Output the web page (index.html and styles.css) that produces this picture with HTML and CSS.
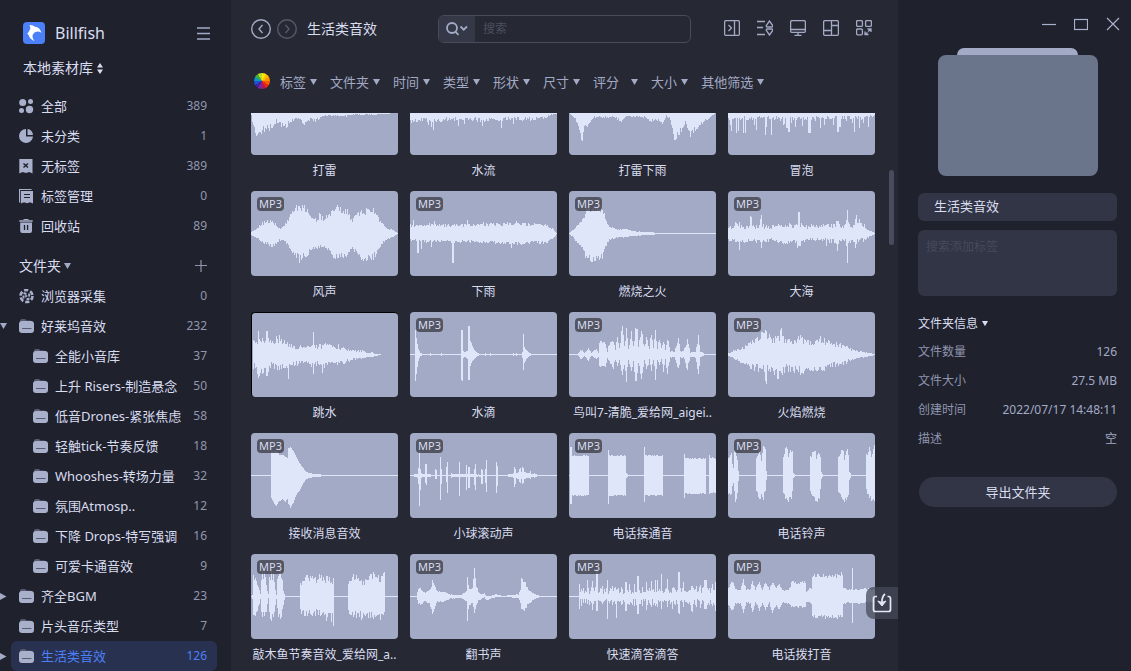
FILE: index.html
```html
<!DOCTYPE html>
<html lang="zh-CN">
<head>
<meta charset="utf-8">
<meta name="viewport" content="width=device-width, initial-scale=1">
<title>Billfish</title>
<link rel="stylesheet" href="styles.css">
</head>
<body>
<svg class="defs" aria-hidden="true">
  <symbol id="folder" viewBox="0 0 15 15">
    <path d="M1 6V2Q1 0 3 0h2.500Q6.500 0 7 1l.5.600H11q2 0 2 2V6z" fill="#565b6f"/>
    <rect x="0" y="2" width="15" height="12" rx="3" fill="#a9b0cb"/>
    <path d="M3.500 9.500h8.500" stroke="#565b70" stroke-width="1.200" stroke-linecap="round"/>
  </symbol>
  <symbol id="down" viewBox="0 0 7 7"><path d="M0 0h7L3.500 6z" fill="currentColor"/></symbol>
  <symbol id="right" viewBox="0 0 7 7"><path d="M0 0v7L6.500 3.500z" fill="currentColor"/></symbol>
</svg>
<div class="app">
  <aside class="sidebar">
    <header class="brand">
      <svg class="logo" viewBox="0 0 22 22" aria-hidden="true">
        <rect width="22" height="22" rx="4" fill="#4b80f8"/>
        <path d="M6.500 3Q10 2.800 12 4.800Q16.500 5 18.500 10.800Q15 8.800 12.500 10Q9.500 11.500 9.500 14.500Q9.500 17 11.500 19Q6.500 17 5.800 13.200L4.300 11.800Q5.500 10.500 6.500 8.500Q8 5.500 6.500 3z" fill="#fff"/>
      </svg>
      <span class="brand-name">Billfish</span>
      <button class="icon-btn" aria-label="菜单"><svg width="13" height="13" viewBox="0 0 13 13"><path d="M0 1h13M0 6.500h13M0 12h13" stroke="#a3aac5" stroke-width="1.400"/></svg></button>
    </header>
    <button class="library">本地素材库<svg width="6" height="11" viewBox="0 0 6 11"><path d="M3 0l3 4.500H0zM3 11L0 6.500h6z" fill="currentColor"/></svg></button>

    <nav class="nav" aria-label="素材">
      <div class="row"><span class="twist"></span><a class="item" href="#"><svg class="ico" viewBox="0 0 15 15"><g fill="#a9b0cb"><circle cx="3.700" cy="3.500" r="3.500"/><circle cx="11.500" cy="2.500" r="2.500"/><circle cx="2.500" cy="11.500" r="2.500"/><circle cx="10.500" cy="10.500" r="3.700"/></g></svg><span class="name">全部</span><span class="count">389</span></a></div>
      <div class="row"><span class="twist"></span><a class="item" href="#"><svg class="ico" viewBox="0 0 15 15"><path d="M7 0A7 7 0 1 0 14 7.500H7z" fill="#a9b0cb"/><path d="M8.500 0v6H14A6 6 0 0 0 8.500 0z" fill="#a9b0cb"/></svg><span class="name">未分类</span><span class="count">1</span></a></div>
      <div class="row"><span class="twist"></span><a class="item" href="#"><svg class="ico" viewBox="0 0 15 15"><path d="M.3 0h13.200V14.500l-3.200-1.500-3.300 1-3.500-1L.3 14.500z" fill="#a9b0cb"/><path d="M4.500 4.500l4.500 4M9 4.500L4.500 8.500" stroke="#1f212d" stroke-width="1.400"/></svg><span class="name">无标签</span><span class="count">389</span></a></div>
      <div class="row"><span class="twist"></span><a class="item" href="#"><svg class="ico" viewBox="0 0 15 15"><path d="M.6 13.500V.5h12" fill="none" stroke="#a9b0cb" stroke-width="1.200"/><path d="M2 2H14V14.500l-3-1.300-3 1-3-1-3 1.300z" fill="#a9b0cb"/><path d="M5 5.500h6M5 8.500h6" stroke="#1f212d" stroke-width="1.100"/></svg><span class="name">标签管理</span><span class="count">0</span></a></div>
      <div class="row"><span class="twist"></span><a class="item" href="#"><svg class="ico" viewBox="0 0 15 15"><path d="M4.500.300h5M.3 2h13.400" stroke="#a9b0cb" stroke-width="1.300"/><path d="M1.200 3.500h11.800v8.500q0 2-2 2H3.200q-2 0-2-2z" fill="#a9b0cb"/><path d="M5.500 6v5M8.600 6v5" stroke="#1f212d" stroke-width="1.300"/></svg><span class="name">回收站</span><span class="count">89</span></a></div>
    </nav>

    <div class="group-head">
      <button class="group-title">文件夹<svg class="tri"><use href="#down"/></svg></button>
      <button class="icon-btn" aria-label="新建文件夹"><svg width="12" height="12" viewBox="0 0 12 12"><path d="M0 5.500h12M6 0v12" stroke="#8f95ad" stroke-width="1.200"/></svg></button>
    </div>
    <nav class="nav" aria-label="文件夹">
      <div class="row"><span class="twist"></span><a class="item" href="#"><svg class="ico" viewBox="0 0 15 15"><circle cx="7.500" cy="7" r="6" fill="none" stroke="#a9b0cb" stroke-width="2.600" stroke-dasharray="4.200 2.080"/><path d="M4.500 4l3 1M10.500 4.500l-.5 3M10.500 9.500l-3 1M4.500 6.500v3" stroke="#a9b0cb" stroke-width="2"/><path d="M6.200 5.500l2.800 1.600-2.800 1.700z" fill="#a9b0cb"/></svg><span class="name">浏览器采集</span><span class="count">0</span></a></div>
      <div class="row"><button class="twist" aria-label="收起"><svg class="tri"><use href="#down"/></svg></button><a class="item" href="#"><svg class="ico"><use href="#folder"/></svg><span class="name">好莱坞音效</span><span class="count">232</span></a></div>
      <div class="row child"><span class="twist"></span><a class="item" href="#"><svg class="ico"><use href="#folder"/></svg><span class="name">全能小音库</span><span class="count">37</span></a></div>
      <div class="row child"><span class="twist"></span><a class="item" href="#"><svg class="ico"><use href="#folder"/></svg><span class="name">上升 Risers-制造悬念</span><span class="count">50</span></a></div>
      <div class="row child"><span class="twist"></span><a class="item" href="#"><svg class="ico"><use href="#folder"/></svg><span class="name">低音Drones-紧张焦虑</span><span class="count">58</span></a></div>
      <div class="row child"><span class="twist"></span><a class="item" href="#"><svg class="ico"><use href="#folder"/></svg><span class="name">轻触tick-节奏反馈</span><span class="count">18</span></a></div>
      <div class="row child"><span class="twist"></span><a class="item" href="#"><svg class="ico"><use href="#folder"/></svg><span class="name">Whooshes-转场力量</span><span class="count">32</span></a></div>
      <div class="row child"><span class="twist"></span><a class="item" href="#"><svg class="ico"><use href="#folder"/></svg><span class="name">氛围Atmosp..</span><span class="count">12</span></a></div>
      <div class="row child"><span class="twist"></span><a class="item" href="#"><svg class="ico"><use href="#folder"/></svg><span class="name">下降 Drops-特写强调</span><span class="count">16</span></a></div>
      <div class="row child"><span class="twist"></span><a class="item" href="#"><svg class="ico"><use href="#folder"/></svg><span class="name">可爱卡通音效</span><span class="count">9</span></a></div>
      <div class="row"><button class="twist" aria-label="展开"><svg class="tri"><use href="#right"/></svg></button><a class="item" href="#"><svg class="ico"><use href="#folder"/></svg><span class="name">齐全BGM</span><span class="count">23</span></a></div>
      <div class="row"><span class="twist"></span><a class="item" href="#"><svg class="ico"><use href="#folder"/></svg><span class="name">片头音乐类型</span><span class="count">7</span></a></div>
      <div class="row"><button class="twist" aria-label="展开"><svg class="tri"><use href="#right"/></svg></button><a class="item active" href="#"><svg class="ico"><use href="#folder"/></svg><span class="name">生活类音效</span><span class="count">126</span></a></div>
    </nav>
  </aside>

  <main class="main">
    <div class="topbar">
      <div class="crumbs">
        <button class="round" aria-label="后退"><svg width="20" height="20" viewBox="0 0 20 20" fill="none" stroke="currentColor" stroke-width="1.400"><circle cx="10" cy="10" r="9.300"/><path d="M11.500 6L8 10l3.500 4"/></svg></button>
        <button class="round dim" aria-label="前进"><svg width="20" height="20" viewBox="0 0 20 20" fill="none" stroke="currentColor" stroke-width="1.400"><circle cx="10" cy="10" r="9.300"/><path d="M8.500 6L12 10l-3.500 4"/></svg></button>
        <h1>生活类音效</h1>
      </div>
      <form class="search">
        <button class="search-kind" type="button" aria-label="搜索方式"><svg width="22" height="14" viewBox="0 0 22 14" fill="none" stroke="#a3aac5" stroke-width="1.800"><circle cx="6" cy="6" r="5"/><path d="M9.500 9.800l3 3M14.500 4.500l3.200 3.200L21 4.500"/></svg></button>
        <input type="text" placeholder="搜索" aria-label="搜索">
      </form>
      <div class="tools">
        <button class="icon-btn" aria-label="侧栏"><svg width="16" height="16" viewBox="0 0 16 16"><rect x=".6" y=".6" width="14.800" height="14.800" rx="1.500"/><path d="M10.500 1v14M4.500 5l3 3-3 3"/></svg></button>
        <button class="icon-btn" aria-label="排序"><svg width="16" height="16" viewBox="0 0 16 16"><path d="M0 1.500h8M0 7.500h6M0 14.500h8M12.500 1L9.300 5.500q-.3 1.500 1 1.500h4.400q1.300 0 1-1.500zM12.500 15L9.300 10.500q-.3-1.500 1-1.500h4.400q1.300 0 1 1.500z"/></svg></button>
        <button class="icon-btn" aria-label="显示"><svg width="16" height="16" viewBox="0 0 16 16"><rect x=".6" y=".6" width="14.800" height="11.800" rx="1.500"/><path d="M1 9.500h14M8 12v3M4.500 15.400h7"/></svg></button>
        <button class="icon-btn" aria-label="布局"><svg width="16" height="16" viewBox="0 0 16 16"><rect x=".6" y=".6" width="14.800" height="14.800" rx="1.500"/><path d="M8.500 1v14M8.500 5.500h6.500M1 10.500h7.500"/></svg></button>
        <button class="icon-btn" aria-label="全屏"><svg width="16" height="16" viewBox="0 0 16 16"><rect x=".6" y=".6" width="5.800" height="5.800" rx="1"/><rect x="9.600" y=".6" width="5.800" height="5.800" rx="1"/><rect x=".6" y="9" width="5.800" height="5.800" rx="1"/><path d="M11.500 9h3.500v3M15 9l-3 2.500M9 11.500v3h3.500M9 14.500l2.500-2"/></svg></button>
      </div>
    </div>

    <div class="filters">
      <button class="wheel" aria-label="颜色"></button>
      <button class="filter">标签<svg class="tri"><use href="#down"/></svg></button>
      <button class="filter">文件夹<svg class="tri"><use href="#down"/></svg></button>
      <button class="filter">时间<svg class="tri"><use href="#down"/></svg></button>
      <button class="filter">类型<svg class="tri"><use href="#down"/></svg></button>
      <button class="filter">形状<svg class="tri"><use href="#down"/></svg></button>
      <button class="filter">尺寸<svg class="tri"><use href="#down"/></svg></button>
      <button class="filter wide">评分<svg class="tri"><use href="#down"/></svg></button>
      <button class="filter">大小<svg class="tri"><use href="#down"/></svg></button>
      <button class="filter">其他筛选<svg class="tri"><use href="#down"/></svg></button>
    </div>

    <div class="stage">
      <div class="scroller">
        <div class="grid">
          <figure class="card"><div class="thumb"><svg class="wave" data-wave="thunder"></svg></div><figcaption>打雷</figcaption></figure>
          <figure class="card"><div class="thumb"><svg class="wave" data-wave="stream"></svg></div><figcaption>水流</figcaption></figure>
          <figure class="card"><div class="thumb"><svg class="wave" data-wave="storm"></svg></div><figcaption>打雷下雨</figcaption></figure>
          <figure class="card"><div class="thumb"><svg class="wave" data-wave="bubbles"></svg></div><figcaption>冒泡</figcaption></figure>

          <figure class="card"><div class="thumb"><svg class="wave" data-wave="wind"></svg><span class="tag">MP3</span></div><figcaption>风声</figcaption></figure>
          <figure class="card"><div class="thumb"><svg class="wave" data-wave="rain"></svg><span class="tag">MP3</span></div><figcaption>下雨</figcaption></figure>
          <figure class="card"><div class="thumb"><svg class="wave" data-wave="fire"></svg><span class="tag">MP3</span></div><figcaption>燃烧之火</figcaption></figure>
          <figure class="card"><div class="thumb"><svg class="wave" data-wave="sea"></svg><span class="tag">MP3</span></div><figcaption>大海</figcaption></figure>

          <figure class="card"><div class="thumb framed"><svg class="wave" data-wave="dive"></svg></div><figcaption>跳水</figcaption></figure>
          <figure class="card"><div class="thumb"><svg class="wave" data-wave="drip"></svg><span class="tag">MP3</span></div><figcaption>水滴</figcaption></figure>
          <figure class="card"><div class="thumb"><svg class="wave" data-wave="birds"></svg><span class="tag">MP3</span></div><figcaption>鸟叫7-清脆_爱给网_aigei..</figcaption></figure>
          <figure class="card"><div class="thumb"><svg class="wave" data-wave="flame"></svg><span class="tag">MP3</span></div><figcaption>火焰燃烧</figcaption></figure>

          <figure class="card"><div class="thumb"><svg class="wave" data-wave="message"></svg><span class="tag">MP3</span></div><figcaption>接收消息音效</figcaption></figure>
          <figure class="card"><div class="thumb"><svg class="wave" data-wave="ball"></svg><span class="tag">MP3</span></div><figcaption>小球滚动声</figcaption></figure>
          <figure class="card"><div class="thumb"><svg class="wave" data-wave="connect"></svg><span class="tag">MP3</span></div><figcaption>电话接通音</figcaption></figure>
          <figure class="card"><div class="thumb"><svg class="wave" data-wave="ring"></svg><span class="tag">MP3</span></div><figcaption>电话铃声</figcaption></figure>

          <figure class="card"><div class="thumb"><svg class="wave" data-wave="woodfish"></svg><span class="tag">MP3</span></div><figcaption>敲木鱼节奏音效_爱给网_a..</figcaption></figure>
          <figure class="card"><div class="thumb"><svg class="wave" data-wave="pages"></svg><span class="tag">MP3</span></div><figcaption>翻书声</figcaption></figure>
          <figure class="card"><div class="thumb"><svg class="wave" data-wave="ticks"></svg><span class="tag">MP3</span></div><figcaption>快速滴答滴答</figcaption></figure>
          <figure class="card"><div class="thumb"><svg class="wave" data-wave="dial"></svg><span class="tag">MP3</span></div><figcaption>电话拨打音</figcaption></figure>
        </div>
      </div>
      <div class="scrollbar"></div>
      <button class="import" aria-label="导入"><svg width="20" height="20" viewBox="0 0 20 20" fill="none" stroke="#e3e7f6" stroke-width="1.700"><path d="M5 3.500H3.500Q1.500 3.500 1.500 5.500v11q0 2 2 2h13q2 0 2-2v-11Q18.500 3.500 16.500 3.500H15.500"/><path d="M13 1Q9.500 4 10 10"/><path d="M5.800 8L10 9.500 14 8 10 13z" fill="#e3e7f6" stroke-width="1"/></svg></button>
    </div>
  </main>

  <aside class="panel">
    <div class="window">
      <button class="icon-btn" aria-label="最小化"><svg width="14" height="14" viewBox="0 0 14 14"><path d="M0 7.500h14"/></svg></button>
      <button class="icon-btn" aria-label="最大化"><svg width="14" height="14" viewBox="0 0 14 14"><rect x=".5" y="2.500" width="13" height="10"/></svg></button>
      <button class="icon-btn" aria-label="关闭"><svg width="14" height="14" viewBox="0 0 14 14"><path d="M1 1l12 12M13 1L1 13"/></svg></button>
    </div>
    <div class="cover"><div class="cover-tab"></div><div class="cover-body"></div></div>
    <input class="field" type="text" value="生活类音效" aria-label="名称">
    <textarea class="notes" placeholder="搜索添加标签" aria-label="标签"></textarea>
    <h2>文件夹信息<svg class="tri small"><use href="#down"/></svg></h2>
    <dl class="facts">
      <div><dt>文件数量</dt><dd>126</dd></div>
      <div><dt>文件大小</dt><dd>27.5 MB</dd></div>
      <div><dt>创建时间</dt><dd>2022/07/17 14:48:11</dd></div>
      <div><dt>描述</dt><dd>空</dd></div>
    </dl>
    <button class="export">导出文件夹</button>
  </aside>
</div>
<script src="waves.js"></script>
</body>
</html>
```
FILE: styles.css
```css
* { box-sizing: border-box; }

body {
  margin: 0;
  background: #1f212d;
  color: #d9ddf0;
  font: 13px/20px "Noto Sans", "Noto Sans CJK SC", sans-serif;
}

button, input, textarea { font: inherit; color: inherit; }
button { padding: 0; border: 0; background: none; cursor: pointer; }
a { color: inherit; text-decoration: none; }
svg { display: block; flex: none; }

.defs { position: absolute; width: 0; height: 0; }
.app { display: flex; height: 100vh; overflow: hidden; }
.tri { width: 7px; height: 7px; }
.tri.small { width: 6px; height: 6px; }
.icon-btn { display: flex; }

/* Sidebar */
.sidebar { flex: none; width: 231px; padding: 22px 14px 0 0; }
.brand { display: flex; align-items: center; height: 22px; padding: 0 7px 0 23px; }
.logo { width: 22px; height: 22px; }
.brand-name { flex: 1; margin-left: 10px; font-size: 16px; }
.library {
  display: flex;
  align-items: center;
  gap: 4px;
  margin: 14px 0 13px 23px;
  font-size: 14px;
}
.row { display: flex; height: 30px; }
.twist { display: flex; align-items: center; flex: none; width: 11px; color: #a3aac5; }
.item {
  display: flex;
  align-items: center;
  flex: 1;
  min-width: 0;
  padding: 0 10px 0 8px;
  border-radius: 6px;
}
.child .item { padding-left: 22px; }
.ico { width: 15px; height: 15px; }
.name { flex: 1; margin-left: 7px; white-space: nowrap; }
.count { color: #9297ae; font-size: 12px; }
.active { background: #293150; color: #4b80f8; }
.active .count { color: inherit; }
.group-head {
  display: flex;
  align-items: center;
  justify-content: space-between;
  height: 30px;
  margin-top: 10px;
  padding: 0 10px 0 19px;
}
.group-title { display: flex; align-items: center; gap: 3px; font-size: 14px; }
.group-title .tri { color: #a3aac5; }

/* Main column */
.main {
  display: flex;
  flex-direction: column;
  flex: 1;
  min-width: 0;
  background: #262833;
}
.topbar {
  display: flex;
  align-items: center;
  padding: 15px 26px 0 20px;
}
.crumbs { display: flex; align-items: center; gap: 6px; flex: none; width: 187px; }
.round { color: #a3aac5; }
.round.dim { color: #565a6b; }
.crumbs h1 { margin: 0 0 0 4px; font-size: 14px; font-weight: 400; }
.search {
  display: flex;
  flex: 1;
  min-width: 0;
  height: 28px;
  border: 1px solid #484b5a;
  border-radius: 6px;
  overflow: hidden;
}
.search-kind {
  display: flex;
  align-items: center;
  justify-content: center;
  width: 36px;
  background: #353847;
}
.search input {
  flex: 1;
  min-width: 0;
  padding: 0 8px;
  border: 0;
  background: none;
  font-size: 12px;
}
.search input::placeholder { color: #4c4f5f; }
.tools { display: flex; gap: 17px; margin: 0 0 2px 33px; }
.tools svg { fill: none; stroke: #a3aac5; stroke-width: 1.300; }

.filters {
  display: flex;
  align-items: center;
  gap: 13px;
  height: 20px;
  margin-top: 29px;
  padding-left: 23px;
  color: #a3aac5;
}
.wheel {
  width: 16px;
  height: 16px;
  margin: 0 -3px 2px 0;
  border-radius: 50%;
  background: conic-gradient(#fce803 0 30deg, #fcb900 0 60deg, #fd9300 0 90deg, #fc5a05 0 120deg, #f42510 0 150deg, #b01a4c 0 180deg, #7c259c 0 210deg, #41219c 0 240deg, #1f50d8 0 270deg, #0a94c8 0 300deg, #43ac3c 0 330deg, #bdda28 0);
}
.filter { display: flex; align-items: center; gap: 4px; white-space: nowrap; }
.filter.wide { gap: 12px; }

.stage { position: relative; flex: 1; min-height: 0; margin-top: 21px; }
.scroller { height: 100%; overflow: hidden; }
.grid {
  display: grid;
  grid-template-columns: repeat(4, minmax(0, 1fr));
  gap: 12px;
  padding: 0 23px 24px 20px;
}
.card { margin: 0; }
.thumb {
  position: relative;
  height: 85px;
  border-radius: 4px;
  background: #a3aac5;
  overflow: hidden;
}
.thumb.framed { border: 1px solid #000; border-width: 1px 0 0 1px; }
.wave { width: 100%; height: 85px; }
.framed .wave { height: 84px; }
.tag {
  position: absolute;
  top: 6px;
  left: 6px;
  padding: 0 2px;
  border-radius: 4px;
  background: rgba(60, 62, 72, 0.78);
  font-size: 11px;
  line-height: 14px;
}
figcaption {
  margin-top: 8px;
  font-size: 12px;
  line-height: 16px;
  text-align: center;
  white-space: nowrap;
}
.scrollbar {
  position: absolute;
  top: 57px;
  right: 4px;
  width: 5px;
  height: 75px;
  border-radius: 3px;
  background: #484c5e;
}
.import {
  position: absolute;
  right: 0;
  bottom: 52px;
  display: flex;
  align-items: center;
  justify-content: center;
  width: 32px;
  height: 32px;
  border-radius: 8px 0 0 8px;
  background: rgba(69, 73, 89, 0.75);
}

/* Details panel */
.panel {
  display: flex;
  flex-direction: column;
  flex: none;
  width: 233px;
  padding: 17px 14px 0 20px;
}
.window { display: flex; justify-content: flex-end; gap: 18px; margin-right: -3px; }
.window svg { fill: none; stroke: #a9b0cb; stroke-width: 1.200; }
.cover { width: 160px; margin: 17px auto; }
.cover-tab {
  width: 121px;
  height: 7px;
  margin: 0 auto;
  border-radius: 8px 8px 0 0;
  background: #a3aac5;
}
.cover-body { height: 121px; border-radius: 8px; background: #6a758c; }
.field, .notes {
  width: 100%;
  border: 0;
  border-radius: 6px;
  background: #323545;
}
.field { height: 28px; padding: 0 16px 4px; }
.notes {
  height: 66px;
  margin-top: 9px;
  padding: 7px 8px;
  font-size: 12px;
  resize: none;
}
.notes::placeholder { color: #474a5a; }
.panel h2 {
  display: flex;
  align-items: center;
  gap: 4px;
  margin: 18px 0 3px;
  font-size: 12px;
  font-weight: 400;
}
.facts { margin: 0; color: #a3aac5; font-size: 12px; line-height: 29px; }
.facts div { display: flex; justify-content: space-between; }
.facts dt { color: #8f95ad; }
.facts dd { margin: 0; }
.export {
  height: 30px;
  margin: 24px 0 0 1px;
  border-radius: 15px;
  background: #323545;
}
```
FILE: waves.js
```js
// p: envelope points (x, up, down); n: roughness; s: single-column peaks (x, up, down)
const waves = {
  thunder: { n: .45, p: [0,3,3, 1,16,16, 3,22,22, 6,25,25, 7,30,30, 8,26,26, 10,24,24, 14,20,20, 22,17,17, 25,10,10, 28,17,17, 33,13,13, 35,16,16, 38,10,10, 45,7,7, 53,14,14, 58,8,8, 65,10,10, 70,4,4, 78,3,3, 95,4,4, 102,2,2, 125,2,2, 134,1,1, 146,0,0] },
  stream: { n: .5, p: [0,10,10, 15,9,9, 25,10,10, 40,8,8, 70,9,9, 100,8,8, 120,8,8, 135,6,6, 141,2,2, 146,1,1], s: [18,12,12, 21,14,14, 23,17,17, 48,13,13, 54,11,11, 72,13,13, 91,15,15, 103,11,11] },
  storm: { n: .35, p: [0,0,0, 6,7,7, 9,16,16, 11,22,22, 12,24,24, 13,28,28, 14,20,20, 16,18,18, 20,11,11, 25,5,5, 45,5,5, 52,10,10, 57,3,3, 75,5,5, 80,9,9, 88,8,8, 94,12,12, 97,3,3, 101,7,7, 104,23,23, 106,29,29, 110,25,25, 113,17,17, 116,10,10, 119,20,20, 121,24,24, 125,20,20, 130,14,14, 140,6,6, 146,0,0], s: [12,27,27, 13,28,28, 105,27,27, 106,27,27, 107,26,26] },
  bubbles: { n: .6, p: [0,8,8, 30,7,7, 60,8,8, 100,7,7, 135,7,7, 146,3,3], s: [2,12,12, 3,18,18, 8,20,20, 10,18,18, 15,20,20, 17,20,20, 26,12,12, 28,17,17, 37,22,22, 38,14,14, 43,22,22, 52,8,8, 55,12,12, 56,11,11, 58,15,15, 59,15,15, 60,19,19, 61,19,19, 63,10,10, 67,14,14, 74,13,13, 80,20,20, 81,20,20, 82,20,20, 87,8,8, 92,15,15, 96,12,12, 105,12,12, 109,19,19, 110,19,19, 111,14,14, 112,14,14, 118,8,8, 124,10,10, 126,19,19, 131,15,15, 135,10,10, 140,14,14] },
  wind: { n: .3, p: [0,1,1, 5,5,4, 10,10,9, 16,14,12, 22,13,14, 28,5,7, 33,8,7, 38,19,15, 42,24,22, 46,29,27, 50,29,29, 55,28,24, 60,17,17, 66,15,16, 69,20,16, 73,15,15, 78,23,20, 83,26,27, 86,28,27, 95,27,26, 101,14,15, 104,21,21, 110,23,28, 116,27,29, 121,27,28, 126,18,20, 131,12,10, 136,5,6, 142,3,3, 146,0,0], s: [45,28,24, 48,27,29, 68,20,14, 86,28,24] },
  rain: { n: .35, p: [0,9,7, 20,10,9, 40,9,9, 80,10,10, 110,11,11, 134,10,10, 142,6,7, 146,0,0], s: [3,13,6, 7,8,19, 8,7,19, 11,8,15, 21,9,13, 24,12,6, 42,8,29, 43,8,29, 57,13,7, 73,11,7, 97,11,8, 101,8,14, 106,12,8] },
  fire: { n: .25, p: [0,0,0, 4,4,4, 8,9,10, 13,15,15, 15,20,22, 17,27,26, 20,27,27, 24,26,29, 28,28,26, 33,27,26, 35,20,16, 37,12,13, 40,7,6, 48,4,4, 55,5,4, 65,2,2, 80,1,1, 92,0,0, 146,0,0] },
  sea: { n: .5, p: [0,7,9, 4,8,7, 8,11,10, 15,7,9, 22,8,9, 35,9,10, 42,7,8, 47,9,10, 55,12,11, 60,10,11, 64,9,8, 70,13,15, 73,12,13, 78,8,6, 88,10,8, 98,9,8, 108,11,10, 114,7,8, 119,12,11, 124,9,10, 130,11,9, 136,9,8, 140,4,4, 146,0,0], s: [7,11,8, 11,11,16, 22,17,7, 23,16,7, 32,14,8, 33,18,14, 47,7,7, 70,21,12, 71,21,12, 98,8,12, 108,12,10, 109,12,17, 110,12,10, 118,13,12, 119,23,29, 127,14,14, 128,18,10, 131,14,6] },
  dive: { n: .5, end: 134, p: [0,0,0, 1,23,16, 4,20,18, 6,25,24, 9,24,22, 12,22,23, 14,24,23, 17,16,16, 20,14,14, 24,21,17, 27,21,17, 30,18,14, 35,14,15, 42,10,11, 48,14,11, 53,9,10, 57,11,12, 65,11,11, 72,13,14, 80,11,10, 87,11,10, 94,8,9, 100,6,6, 110,5,4, 120,3,3, 128,1,0, 133,0,0, 146,0,0], s: [6,24,23, 14,24,21, 15,24,21, 24,19,10, 27,20,15, 36,8,24, 61,23,19, 70,10,18, 87,11,7] },
  drip: { n: .1, p: [0,0,0, 5,0,0, 6,17,20, 8,5,6, 10,1,1, 13,0,0, 50,0,0, 54,2,2, 60,14,12, 62,8,6, 64,4,4, 67,1,1, 70,0,0, 111,0,0, 114,8,8, 116,4,4, 119,1,1, 122,0,0, 146,0,0], s: [5,24,26, 20,1,1, 31,1,1, 51,24,25, 52,24,26, 53,3,3, 54,2,2, 55,2,2, 56,3,3, 57,3,4, 58,28,25, 59,28,25, 75,1,1, 80,1,1, 103,1,1, 106,1,1, 113,20,15] },
  birds: { n: .35, p: [0,0,0, 8,0,0, 12,5,5, 15,1,1, 19,7,7, 22,1,1, 27,6,4, 29,2,2, 30,15,12, 36,12,13, 38,3,3, 40,13,9, 44,18,16, 46,5,5, 48,20,17, 50,8,6, 53,30,24, 55,8,12, 57,27,28, 59,7,7, 62,28,17, 64,10,8, 66,28,28, 68,28,26, 69,8,8, 72,26,26, 75,8,6, 77,22,20, 80,6,6, 82,26,20, 84,7,6, 86,26,26, 88,7,5, 90,20,10, 92,6,6, 94,18,18, 96,5,5, 98,20,22, 101,3,3, 105,3,3, 109,18,18, 111,3,3, 114,3,3, 118,17,17, 121,2,2, 126,3,3, 129,20,20, 131,3,3, 136,0,0, 146,0,0], s: [53,28,20, 57,26,27, 66,26,26, 67,25,26, 72,23,24, 86,24,25, 129,19,19] },
  flame: { n: .5, p: [0,1,1, 8,6,6, 15,9,9, 20,12,12, 24,17,16, 30,21,17, 33,23,17, 36,22,19, 41,21,18, 46,20,20, 52,24,22, 57,20,18, 62,18,18, 68,20,20, 73,19,21, 78,16,16, 85,17,17, 92,18,16, 97,17,16, 105,13,13, 112,12,12, 118,9,9, 125,5,5, 135,3,3, 146,0,0], s: [27,15,12, 33,22,14, 37,24,26, 38,23,29, 49,18,24, 50,18,24, 52,24,16, 53,26,18, 72,19,20, 92,18,12] },
  message: { n: .03, p: [0,0,0, 19,0,0, 20,24,22, 22,24,27, 25,24,30, 28,21,25, 31,20,24, 34,19,26, 36,17,23, 37,28,28, 39,28,32, 42,24,27, 45,18,19, 48,12,15, 51,8,9, 54,4,4, 57,2,2, 65,1,1, 74,0,0, 146,0,0] },
  ball: { n: .2, p: [0,0,0, 6,1,1, 9,3,4, 12,1,1, 30,0,0, 48,1,1, 95,0,0, 104,2,2, 112,4,4, 118,2,2, 130,0,0, 146,0,0], s: [8,7,8, 9,24,30, 10,6,14, 15,11,7, 16,11,9, 25,6,3, 26,5,3, 30,18,24, 31,6,8, 36,8,6, 37,13,17, 41,2,2, 49,13,20, 56,10,14, 58,8,12, 59,8,12, 64,6,9, 65,11,14, 71,6,8, 72,5,8, 75,6,7, 76,15,16, 86,13,17, 87,9,10, 104,8,11, 105,6,8, 109,6,6, 110,7,7, 112,8,8, 113,7,7, 120,4,3, 124,2,2] },
  connect: { n: .05, p: [0,0,0, 1,20,20, 19,20,20, 20,0,0, 38,0,0, 39,20,20, 56,20,20, 57,2,2, 59,0,0, 74,0,0, 75,20,20, 93,20,20, 94,0,0, 114,0,0, 115,17,18, 136,17,18, 137,0,0, 139,0,0, 140,17,17, 143,18,17, 146,17,17], s: [1,28,28, 2,28,28, 39,25,28, 75,28,26, 115,21,22, 140,20,18] },
  ring: { n: .2, p: [0,18,18, 3,26,22, 4,12,10, 5,8,8, 6,26,16, 7,26,28, 9,16,20, 10,5,5, 11,0,0, 27,0,0, 28,20,18, 29,22,20, 31,28,24, 33,18,22, 35,30,24, 37,28,16, 38,4,4, 39,0,0, 54,0,0, 55,22,18, 57,29,24, 59,28,26, 60,18,28, 61,26,24, 63,28,24, 64,24,16, 65,3,3, 67,0,0, 81,0,0, 82,20,16, 84,24,22, 86,30,24, 88,18,28, 91,26,26, 92,18,16, 93,3,3, 95,0,0, 109,0,0, 110,20,16, 114,30,26, 116,18,28, 117,24,24, 119,28,24, 120,20,20, 121,4,4, 123,0,0, 137,0,0, 138,22,16, 141,30,24, 143,20,26, 146,30,28] },
  woodfish: { n: .4, p: [0,0,0, 1,2,2, 2,22,20, 4,22,20, 7,11,12, 9,3,3, 10,20,18, 11,28,22, 13,26,24, 15,14,18, 16,5,8, 17,2,2, 18,24,20, 20,29,26, 22,22,20, 24,8,12, 25,2,2, 26,20,18, 29,30,24, 31,20,16, 32,6,8, 34,0,0, 48,0,0, 49,16,17, 55,22,20, 65,22,20, 72,21,23, 80,20,27, 82,19,24, 83,0,0, 96,0,0, 97,18,19, 103,25,22, 108,18,23, 115,18,22, 121,25,22, 128,20,23, 133,24,22, 134,0,0, 146,0,0], s: [82,18,29, 102,22,20, 132,23,18] },
  pages: { n: .3, p: [0,0,0, 6,0,0, 8,9,8, 11,9,9, 14,4,4, 19,6,8, 21,10,12, 22,18,18, 23,18,18, 25,9,9, 27,6,6, 33,5,5, 40,2,2, 50,1,1, 54,4,3, 56,6,5, 57,18,16, 59,9,9, 62,10,7, 64,25,16, 66,12,9, 68,5,4, 70,2,3, 74,3,0, 76,0,4, 80,0,2, 86,2,0, 92,0,0, 108,2,1, 110,8,8, 111,18,16, 115,16,14, 117,9,9, 123,3,3, 130,0,0, 146,0,0], s: [57,19,24, 64,28,16, 22,16,17] },
  ticks: { n: .8, p: [0,0,0, 9,0,0, 10,9,9, 25,9,7, 60,9,8, 100,9,8, 146,10,9], s: [10,12,12, 12,7,9, 18,16,7, 23,15,13, 24,8,7, 27,28,14, 28,28,14, 33,10,7, 38,16,22, 43,10,8, 47,6,21, 52,9,8, 56,14,14, 57,14,14, 60,12,8, 65,12,9, 68,20,17, 69,20,17, 73,9,9, 77,14,13, 82,15,10, 86,16,9, 88,16,10, 92,22,12, 98,17,10, 103,8,12, 109,24,16, 110,24,17, 114,14,10, 122,10,14, 123,10,15, 127,10,10, 131,11,11, 135,16,12, 136,16,12, 137,16,12, 143,12,9, 146,14,14] },
  dial: { n: .2, p: [0,9,8, 3,15,14, 5,15,14, 7,7,7, 12,7,7, 15,17,17, 18,7,6, 22,8,7, 24,17,17, 27,7,6, 31,16,14, 34,7,6, 37,16,14, 41,7,6, 44,15,18, 48,9,9, 51,14,13, 54,6,6, 60,7,7, 62,9,8, 63,15,11, 77,15,11, 78,5,6, 81,8,6, 83,9,7, 84,22,22, 114,22,22, 115,9,8, 119,7,6, 130,7,7, 138,8,6, 146,7,6], s: [89,22,21, 113,24,20, 124,28,26] }
};

function random(seed) {
  return () => {
    seed = (seed * 48271) % 2147483647;
    return seed / 2147483647;
  };
}

function outline({ p, n, s = [], end = 147 }, seed) {
  const next = random(seed);
  const peaks = {};
  for (let i = 0; i < s.length; i += 3) peaks[s[i]] = [s[i + 1], s[i + 2]];
  let d = "";
  let k = 0;
  for (let x = 0; x < end; x++) {
    while (k + 3 < p.length - 3 && p[k + 3] <= x) k += 3;
    const t = Math.min(1, (x - p[k]) / (p[k + 3] - p[k]));
    let up = (p[k + 1] + (p[k + 4] - p[k + 1]) * t) * (1 - n * next());
    let down = (p[k + 2] + (p[k + 5] - p[k + 2]) * t) * (1 - n * next());
    if (peaks[x]) [up, down] = peaks[x];
    up = Math.round(up);
    down = Math.round(down);
    d += `M${x} ${42 - up}h1v${up + down + 1}h-1z`;
  }
  return d;
}

document.querySelectorAll(".wave").forEach((svg, i) => {
  svg.setAttribute("viewBox", "0 0 147 85");
  svg.setAttribute("preserveAspectRatio", "none");
  svg.innerHTML = `<path fill="#e0e6fa" shape-rendering="crispEdges" d="${outline(waves[svg.dataset.wave], i * 9973 + 1301)}"/>`;
});

document.querySelector(".scroller").scrollTop = 43;
```
